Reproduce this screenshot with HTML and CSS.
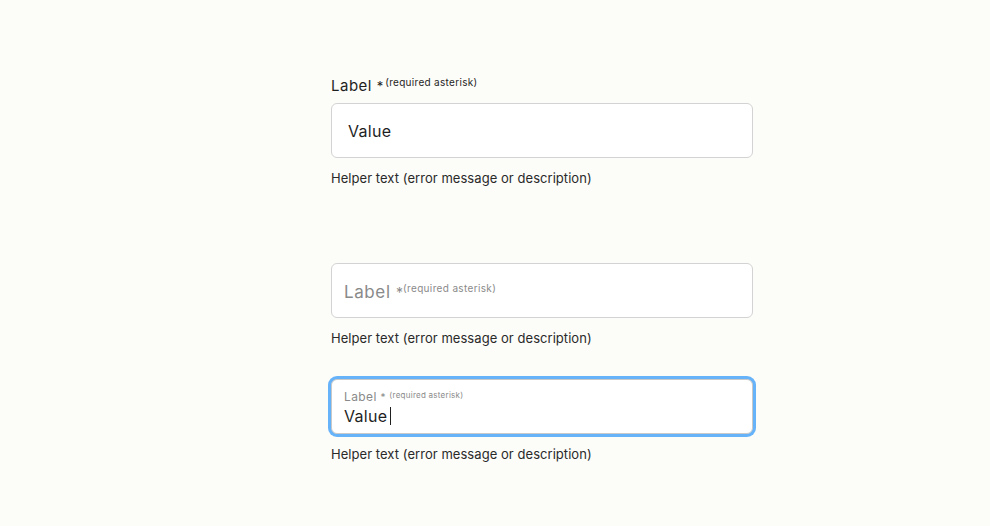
FILE: index.html
```html
<!DOCTYPE html>
<html>
<head>
<meta charset="utf-8">
<link rel="stylesheet" href="styles.css">
</head>
<body>
<main class="page">
  <div class="field field-top">
    <div class="label">Label <span class="ast">*</span><sup class="req">(required asterisk)</sup></div>
    <div class="box box-value"><span class="value">Value</span></div>
    <div class="helper">Helper text (error message or description)</div>
  </div>

  <div class="field field-float">
    <div class="box box-empty"><span class="ph">Label <span class="ast">*</span><sup class="req">(required asterisk)</sup></span></div>
    <div class="helper">Helper text (error message or description)</div>
  </div>

  <div class="field field-focus">
    <div class="box box-focus">
      <span class="small-label">Label <span class="ast">*</span> <sup class="req-s">(required asterisk)</sup></span>
      <span class="value">Value<span class="caret"></span></span>
    </div>
    <div class="helper">Helper text (error message or description)</div>
  </div>
</main>
</body>
</html>
```

FILE: styles.css
```css
html, body {
  margin: 0;
  padding: 0;
  background: #fcfcf8;
}
body {
  font-family: Inter, "Noto Sans", sans-serif;
  color: #1f1f1f;
}
.page {
  width: 422px;
  margin-left: 331px;
  padding-top: 77px;
  display: flex;
  flex-direction: column;
}
.field {
  display: flex;
  flex-direction: column;
}
.label {
  font-size: 15px;
  line-height: 18px;
  height: 18px;
  margin-bottom: 8px;
  letter-spacing: 0.5px;
  color: #1f1f1f;
}
.ast {
  font-size: 13px;
  letter-spacing: 0;
}
.req {
  font-size: 10px;
  letter-spacing: 0.3px;
  vertical-align: 5px;
  line-height: 0;
  margin-left: 2px;
}
.box {
  box-sizing: border-box;
  height: 55px;
  border: 1px solid #d3d3d3;
  border-radius: 6px;
  background: #ffffff;
  display: flex;
  align-items: center;
}
.box-value {
  padding-left: 16px;
}
.value {
  font-size: 16px;
  letter-spacing: 0.3px;
  color: #1f1f1f;
  display: inline-flex;
  align-items: center;
}
.helper {
  margin-top: 12px;
  font-size: 13px;
  line-height: 16px;
  letter-spacing: 0.05px;
  color: #2a2a2a;
}
.field-float {
  margin-top: 77px;
}
.box-empty {
  padding-left: 12px;
}
.ph {
  font-size: 17px;
  letter-spacing: 0.6px;
  color: #8a8a8a;
  margin-top: 2px;
}
.ph .ast {
  font-size: 14px;
}
.ph .req {
  font-size: 10px;
  letter-spacing: 0.35px;
  margin-left: 0;
  vertical-align: 6px;
  color: #8a8a8a;
}
.field-focus {
  margin-top: 33px;
}
.box-focus {
  flex-direction: column;
  align-items: flex-start;
  justify-content: center;
  padding-left: 12px;
  padding-top: 4px;
  height: 55px;
  box-shadow: 0 0 0 3px #66b3fa;
  border-color: #c9c9c9;
}
.small-label {
  font-size: 12px;
  line-height: 14px;
  letter-spacing: 0.4px;
  color: #8a8a8a;
  margin-top: -1px;
}
.small-label .ast {
  font-size: 10px;
}
.req-s {
  font-size: 8px;
  letter-spacing: 0.25px;
  vertical-align: 3px;
  line-height: 0;
}
.box-focus .value {
  margin-top: 2px;
  line-height: 20px;
}
.caret {
  display: inline-block;
  width: 1px;
  height: 18px;
  background: #1f1f1f;
  margin-left: 3px;
}
.field-focus .helper {
  margin-top: 12px;
}
```
